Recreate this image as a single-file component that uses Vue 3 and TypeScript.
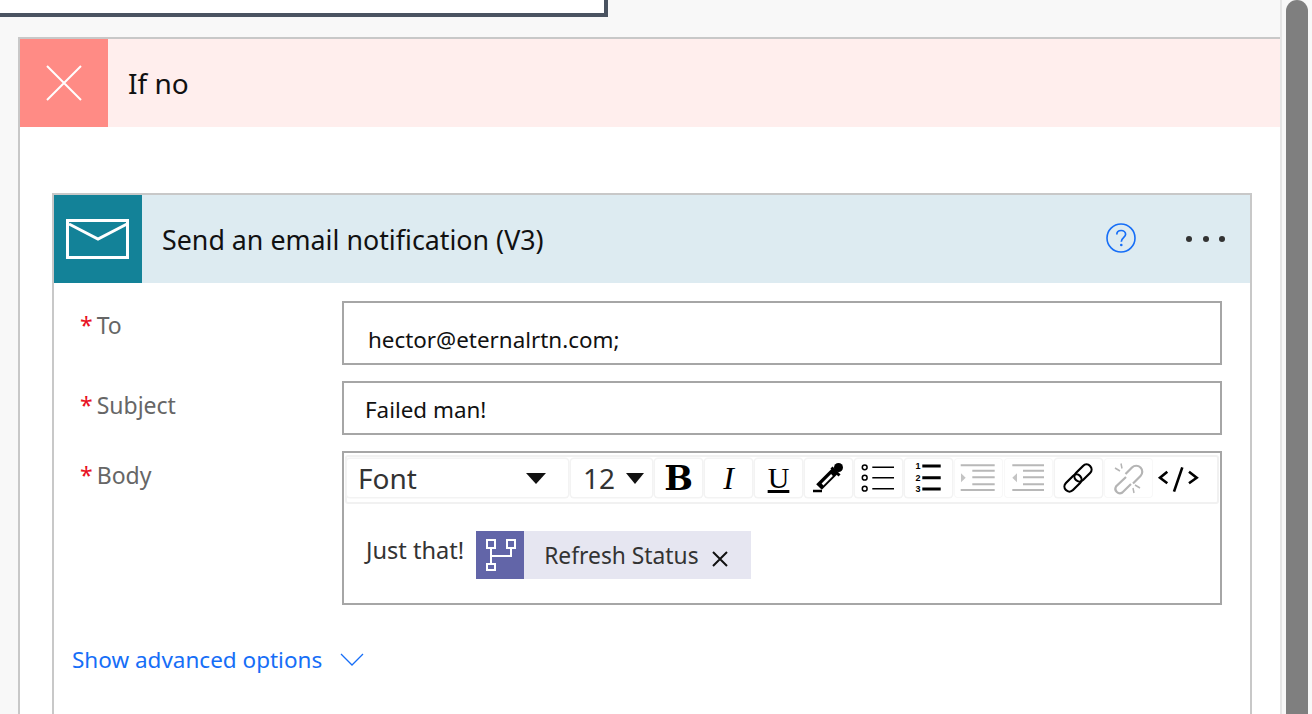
<template>
  <div class="page">
    <div class="top-box"></div>
    <div class="branch">
      <div class="branch-head">
        <div class="branch-icon">
          <svg width="36" height="36" viewBox="0 0 36 36"><path d="M1 1L35 35M35 1L1 35" stroke="#fff" stroke-width="2" fill="none" /></svg>
        </div>
        <span class="branch-title">If no</span>
      </div>
      <div class="action">
        <div class="action-head">
          <div class="action-icon">
            <svg width="64" height="40" viewBox="0 0 64 40" fill="none" stroke="#fff">
              <rect x="1.500" y="1.500" width="60" height="37" stroke-width="3" />
              <path d="M3 5L32 20L61 5" stroke-width="3" />
            </svg>
          </div>
          <span class="action-title">Send an email notification (V3)</span>
          <svg class="help" width="30" height="30" viewBox="0 0 30 30" fill="none">
            <circle cx="15" cy="15" r="14" stroke="#166ef7" stroke-width="1.600" />
            <path d="M10.800 11.500c0-2.600 2-4 4.400-4s4.400 1.500 4.400 3.800c0 3.500-4.300 3.400-4.300 7.400" stroke="#166ef7" stroke-width="1.700" />
            <circle cx="15.300" cy="22" r="1.300" fill="#166ef7" />
          </svg>
          <div class="dots"><i></i><i></i><i></i></div>
        </div>
        <div class="form">
          <div class="row">
            <label class="lbl"><b>*</b>To</label>
            <div class="field to">hector@eternalrtn.com;</div>
          </div>
          <div class="row">
            <label class="lbl"><b>*</b>Subject</label>
            <div class="field subject">Failed man!</div>
          </div>
          <div class="row">
            <label class="lbl"><b>*</b>Body</label>
            <div class="editor">
              <div class="toolbar">
                <div class="tool font-select"><span>Font</span><i class="caret"></i></div>
                <div class="tool size-select"><span>12</span><i class="caret"></i></div>
                <div class="tool btn bold">B</div>
                <div class="tool btn italic">I</div>
                <div class="tool btn under">U</div>
                <div class="tool btn">
                  <svg width="47" height="38" viewBox="0 0 47 38" fill="none">
                    <circle cx="33.500" cy="8.500" r="4.500" fill="#000" />
                    <path d="M26.500 8.500l8 8" stroke="#000" stroke-width="3" />
                    <path d="M29.500 12.500L14 28" stroke="#000" stroke-width="8" />
                    <path d="M27 16L17.500 25.500" stroke="#fff" stroke-width="2.500" />
                    <path d="M8 32h9" stroke="#000" stroke-width="2.500" />
                  </svg>
                </div>
                <div class="tool btn">
                  <svg width="47" height="38" viewBox="0 0 47 38" fill="none" stroke="#000" stroke-width="1.500">
                    <circle cx="9.700" cy="8.300" r="2.400" />
                    <circle cx="9.700" cy="18.700" r="2.400" />
                    <circle cx="9.700" cy="29.700" r="2.400" />
                    <path d="M17.300 8.300H39M17.300 18.700H39M17.300 29.700H39" />
                  </svg>
                </div>
                <div class="tool btn">
                  <svg width="47" height="38" viewBox="0 0 47 38" fill="none">
                    <g class="digits">
                      <text x="13" y="10">1</text>
                      <text x="13" y="21.500">2</text>
                      <text x="13" y="33">3</text>
                    </g>
                    <path d="M17.300 7H35.700M17.300 18.700H35.700M17.300 30H35.700" stroke="#000" stroke-width="3" />
                  </svg>
                </div>
                <div class="tool btn faint">
                  <svg width="47" height="38" viewBox="0 0 47 38" fill="none" stroke="#b8b8b8" stroke-width="2">
                    <path d="M5.700 6.300H39.700M17.300 11.700H39.700M17.300 18.300H39.700M17.300 25.300H39.700M5.700 31H39.700" />
                    <path d="M6 14.300l4.700 4.500L6 23.300z" fill="#c4c4c4" stroke="none" />
                  </svg>
                </div>
                <div class="tool btn faint">
                  <svg width="47" height="38" viewBox="0 0 47 38" fill="none" stroke="#b8b8b8" stroke-width="2">
                    <path d="M7.300 6.300H39M18 11.700H39M18 18.300H39M18 25.300H39M7.300 31H39" />
                    <path d="M12 14.300l-4.700 4.500L12 23.300z" fill="#c4c4c4" stroke="none" />
                  </svg>
                </div>
                <div class="tool btn">
                  <svg width="47" height="38" viewBox="0 0 47 38" fill="none" stroke="#000" stroke-width="2.200">
                    <rect x="18" y="9" width="20" height="10" rx="5" transform="rotate(-45 28 14)" />
                    <rect x="8" y="19" width="20" height="10" rx="5" transform="rotate(-45 18 24)" />
                  </svg>
                </div>
                <div class="tool btn faint">
                  <svg width="47" height="38" viewBox="0 0 47 38" fill="none" stroke="#b4b4b4" stroke-width="2.200">
                    <path d="M20.500 15L27 8.500a6 6 0 0 1 8.500 8.500L28 24.500" />
                    <path d="M21 18L11 27.500a4.500 4.500 0 0 0 6.400 6L26 25" />
                    <path d="M16 4.500l1 5M10 9l5 3M29 34l-1-5M35 29l-5-3" stroke-width="1.500" />
                  </svg>
                </div>
                <div class="tool code">
                  <svg width="50" height="38" viewBox="0 0 50 38" fill="none" stroke="#000" stroke-width="2.600">
                    <path d="M12.300 12.700L5 18.700l7.300 5.600M34 12.700l7.700 6-7.700 5.600M27.300 8.300L19 32.700" />
                  </svg>
                </div>
              </div>
              <div class="editor-body">
                <span class="body-text">Just that!</span>
                <span class="token">
                  <span class="token-icon">
                    <svg width="48" height="48" viewBox="0 0 48 48" fill="none" stroke="#fff" stroke-width="2">
                      <rect x="11" y="9" width="8" height="8" />
                      <rect x="31" y="9" width="8" height="8" />
                      <rect x="11" y="33" width="8" height="6" />
                      <path d="M15 17V33M15 25H35V17" />
                    </svg>
                  </span>
                  <span class="token-text">Refresh Status</span>
                  <svg class="token-x" width="16" height="16" viewBox="0 0 16 16"><path d="M1 1L15 15M15 1L1 15" stroke="#111" stroke-width="2" /></svg>
                </span>
              </div>
            </div>
          </div>
        </div>
        <div class="advanced">
          <span>Show advanced options</span>
          <svg width="24" height="14" viewBox="0 0 24 14" fill="none"><path d="M1 1l11 11L23 1" stroke="#166ef7" stroke-width="1.300" /></svg>
        </div>
      </div>
    </div>
    <div class="scroll-track"><div class="scroll-thumb"></div></div>
  </div>
</template>

<script setup lang="ts">
</script>

<style>
html, body { margin: 0; overflow: hidden; background: #f8f8f8; }
</style>

<style scoped>
.page {
  width: 1312px;
  height: 714px;
  background: #f8f8f8;
  overflow: hidden;
  position: relative;
  font-family: "Noto Sans", sans-serif;
  color: #333;
}

.top-box {
  width: 608px;
  height: 17px;
  box-sizing: border-box;
  background: #fff;
  border-right: 4px solid #4a5361;
  border-bottom: 4px solid #4a5361;
}

.branch {
  margin: 20px 0 0 18px;
  width: 1264px;
  height: 700px;
  box-sizing: border-box;
  border: 2px solid #c8c8c8;
  background: #fff;
}

.branch-head {
  display: flex;
  align-items: center;
  height: 88px;
  background: #ffeeed;
}

.branch-icon {
  width: 88px;
  height: 88px;
  background: #ff8b85;
  display: flex;
  align-items: center;
  justify-content: center;
}

.branch-title {
  margin-left: 20px;
  font-size: 28px;
  color: #111;
}

.action {
  margin: 66px 0 0 32px;
  width: 1200px;
  height: 600px;
  box-sizing: border-box;
  border: 2px solid #c8c8c8;
}

.action-head {
  display: flex;
  align-items: center;
  height: 88px;
  background: #ddebf1;
}

.action-icon {
  width: 88px;
  height: 88px;
  background: #138298;
  display: flex;
  align-items: center;
  justify-content: center;
}

.action-title {
  margin-left: 20px;
  flex: 1;
  font-size: 26.8px;
  color: #111;
}

.help { margin: 0 50px 2px 0; }

.dots {
  display: flex;
  gap: 10.5px;
  margin-right: 25px;
}

.dots i {
  width: 6px;
  height: 6px;
  border-radius: 50%;
  background: #333;
}

.form {
  display: flex;
  flex-direction: column;
  gap: 16px;
  padding: 18px 28px 0 26px;
}

.row { display: flex; }

.lbl {
  width: 262px;
  font-size: 23px;
  color: #666;
  padding-top: 8px;
}

.lbl b {
  color: #e81123;
  font-weight: 400;
  margin-right: 4px;
}

.field {
  width: 880px;
  box-sizing: border-box;
  border: 2px solid #a6a6a6;
  font-size: 22.4px;
  color: #111;
}

.to { height: 64px; padding: 21px 0 0 24px; }
.subject { height: 54px; padding: 11px 0 0 21px; }

.editor {
  width: 880px;
  height: 154px;
  box-sizing: border-box;
  border: 2px solid #a6a6a6;
}

.toolbar {
  display: flex;
  gap: 3px;
  margin: 2px 1px 0 1px;
  padding: 2px 0 0 0;
  height: 49px;
  box-sizing: border-box;
  background: #fff;
  border: 2px solid #f1f1f1;
  border-radius: 3px;
}

.tool {
  background: #fff;
  border-radius: 3px;
  height: 38px;
  display: flex;
  align-items: center;
  justify-content: center;
  color: #333;
  box-shadow: 0 0 0 1.5px #f3f3f3;
}

.tool.faint { box-shadow: 0 0 0 1px #f8f8f8; }

.font-select {
  width: 221px;
  justify-content: space-between;
  padding: 0 22px 0 11px;
  box-sizing: border-box;
  font-size: 28px;
}

.size-select {
  width: 81px;
  justify-content: space-between;
  padding: 0 8px 0 12px;
  box-sizing: border-box;
  font-size: 28px;
}

.caret {
  width: 0;
  height: 0;
  border-left: 10px solid transparent;
  border-right: 10px solid transparent;
  border-top: 11px solid #111;
}

.size-select .caret {
  border-left-width: 9px;
  border-right-width: 9px;
}

.btn { width: 47px; color: #000; }
.code { width: 50px; background: transparent; box-shadow: none; }

.digits text {
  font-family: "Liberation Sans", sans-serif;
  font-size: 9px;
  font-weight: 700;
  fill: #000;
  text-anchor: middle;
}

.bold { font-family: "DejaVu Serif", serif; font-weight: 700; font-size: 34px; }
.italic { font-family: "Liberation Serif", serif; font-style: italic; font-size: 32px; }
.under { font-family: "Liberation Serif", serif; text-decoration: underline; font-size: 30px; }

.editor-body {
  display: flex;
  align-items: flex-start;
  padding: 27px 0 0 22px;
}

.body-text {
  font-size: 23.6px;
  color: #333;
  margin-right: 12px;
  line-height: 38px;
}

.token {
  display: flex;
  align-items: center;
  height: 48px;
  background: #e6e6f1;
}

.token-icon {
  width: 48px;
  height: 48px;
  background: #6265a8;
  display: flex;
  align-items: center;
  justify-content: center;
}

.token-text {
  margin-left: 20px;
  font-size: 22.8px;
  color: #333;
}

.token-x { margin: 8px 23px 0 13px; }

.advanced {
  display: flex;
  align-items: center;
  gap: 18px;
  margin: 39px 0 0 18px;
  font-size: 22.5px;
  color: #166ef7;
}

.scroll-track {
  position: absolute;
  top: 0;
  right: 0;
  width: 32px;
  height: 714px;
  background: #f8f8f8;
  border-left: 2px solid #e6e6e6;
  box-sizing: border-box;
}

.scroll-thumb {
  width: 22px;
  margin-left: 4px;
  height: 760px;
  border-radius: 11px;
  background: #7f7f7f;
}
</style>
